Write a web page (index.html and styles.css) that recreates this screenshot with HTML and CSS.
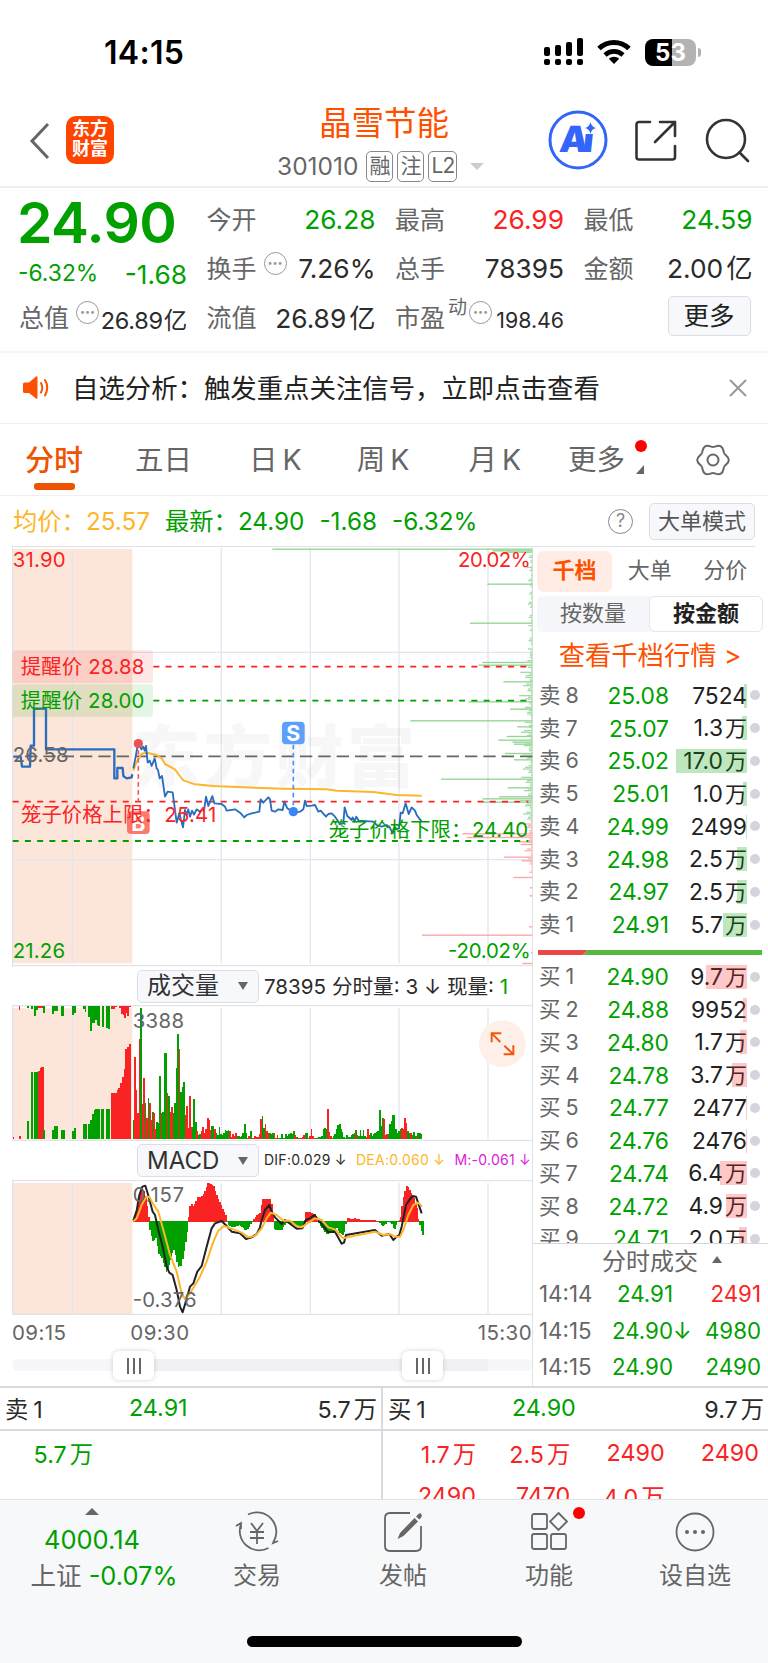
FILE: index.html
```html
<!DOCTYPE html>
<html lang="zh-CN">
<head>
    <meta charset="UTF-8">
    <meta name="viewport" content="width=device-width, initial-scale=1.0">
    <title>晶雪节能 301010</title>
    <link rel="stylesheet" href="styles.css">
</head>
<body>
    <div class="status-bar">
        <span class="clock">14:15</span>
        <div class="status-icons">
            <svg class="signal" width="40" height="28" viewBox="0 0 40 28">
                <rect x="0" y="9" width="6" height="9" rx="2"/><rect x="11" y="7" width="6" height="11" rx="2"/>
                <rect x="22" y="4" width="6" height="14" rx="2"/><rect x="33" y="0" width="6" height="18" rx="2"/>
                <rect x="0" y="21" width="6" height="6" rx="2"/><rect x="11" y="21" width="6" height="6" rx="2"/>
                <rect x="22" y="21" width="6" height="6" rx="2"/><rect x="33" y="21" width="6" height="6" rx="2"/>
            </svg>
            <svg class="wifi" width="36" height="26" viewBox="0 0 36 26">
                <path d="M3 9.5 A21.5 21.5 0 0 1 33 9.5" fill="none" stroke="#000" stroke-width="5"/>
                <path d="M9 16 A13 13 0 0 1 27 16" fill="none" stroke="#000" stroke-width="4.6"/>
                <path d="M18 25 L12.8 19.8 A7.4 7.4 0 0 1 23.2 19.8 Z"/>
            </svg>
            <div class="battery"><span>5</span><span class="dim">3</span></div>
            <i class="battery-nub"></i>
        </div>
    </div>

    <header class="header">
        <svg class="back" width="22" height="38" viewBox="0 0 22 38"><path d="M19 2 L3 19 L19 36"/></svg>
        <div class="logo">东方<br>财富</div>
        <div class="title">
            <h1>晶雪节能</h1>
            <div class="code">301010 <b>融</b><b>注</b><b class="l2">L2</b><i class="caret"></i></div>
        </div>
        <svg class="ai" width="60" height="60" viewBox="0 0 60 60">
            <circle cx="30" cy="30" r="28"/>
            <text x="15" y="42" textLength="34" transform="skewX(-6)">Ai</text>
            <rect x="36" y="12" width="12" height="12" fill="#fff"/>
            <path d="M42.500 12 Q43.500 17 48 18 Q43.500 19 42.500 24 Q41.500 19 37 18 Q41.500 17 42.500 12 Z"/>
        </svg>
        <svg class="line-icon share" width="44" height="44" viewBox="0 0 44 44">
            <path d="M16 3 H5 Q2.500 3 2.500 5.500 V38 Q2.500 40.500 5 40.500 H38.500 Q41 40.500 41 38 V27 M26 3 H41 V17 M41 3 L21 23"/>
        </svg>
        <svg class="line-icon" width="46" height="46" viewBox="0 0 46 46">
            <circle cx="21" cy="21" r="19"/><path d="M34.500 34.500 L43 43"/>
        </svg>
    </header>

    <section class="quote">
        <div class="price">24.90</div>
        <div class="cell"><label>今开</label><span class="green">26.28</span></div>
        <div class="cell"><label>最高</label><span class="red">26.99</span></div>
        <div class="cell"><label>最低</label><span class="green">24.59</span></div>

        <div class="cell change green"><span class="pct">-6.32%</span><span>-1.68</span></div>
        <div class="cell"><label>换手<i class="dots">•••</i></label><span>7.26%</span></div>
        <div class="cell"><label>总手</label><span>78395</span></div>
        <div class="cell"><label>金额</label><span class="raised">2.00<em>亿</em></span></div>

        <div class="cell"><label>总值<i class="dots">•••</i></label><span class="mid">26.89<em>亿</em></span></div>
        <div class="cell"><label>流值</label><span class="raised">26.89<em>亿</em></span></div>
        <div class="cell"><label>市盈<sup>动</sup><i class="dots tight">•••</i></label><span class="small">198.46</span></div>
        <div class="cell end"><button class="more">更多</button></div>
    </section>

    <div class="notice">
        <svg width="28" height="26" viewBox="0 0 28 26">
            <path class="horn" d="M1 9 Q1 7.500 2.500 7.500 H7 L14 1.500 Q15.500 .8 15.500 2.500 V22.500 Q15.500 24.300 14 23.500 L7 18 H2.500 Q1 18 1 16.500 Z"/>
            <path class="wave" d="M19 8 Q21.500 12.500 19 17.500 M23 5 Q27.500 12.500 23 20.500"/>
        </svg>
        <p>自选分析：触发重点关注信号，立即点击查看</p>
        <svg width="18" height="18" viewBox="0 0 18 18"><path class="close" d="M1 1 L17 17 M17 1 L1 17"/></svg>
    </div>

    <nav class="tabs">
        <a class="active">分时</a><a class="five">五日</a><a>日<s></s>K</a><a>周<s></s>K</a><a class="month">月<s></s>K</a>
        <a class="more-tab">更多</a>
        <svg class="gear" width="36" height="36" viewBox="0 0 36 36">
            <g id="teeth"></g>
            <circle cx="18" cy="18" r="5.500"/>
        </svg>
    </nav>

    <div class="summary">
        <span class="avg">均价：25.57</span>
        <span class="green last">最新：<span>24.90</span><span>-1.68</span><span>-6.32%</span></span>
        <i class="help">?</i>
        <button>大单模式</button>
    </div>

    <main class="board">
        <div class="charts">
            <svg class="chart" width="521" height="421" viewBox="36 18 1563 1263">
                <rect class="auction" x="38" y="27" width="359" height="1243"/>
                <path class="grid" d="M217 27 V1270 M664 24 V1270 M931 24 V1270 M1197 24 V1270 M1464 24 V1270 M38 337 H1597 M38 959 H1597"/>
                <path class="frame" d="M38 19 V1280 M36 1277 H1599"/>
                <text class="watermark" x="396" y="726" textLength="850">东方财富</text>
                <g id="depth"></g>
                <rect class="alert-up" x="38" y="331" width="421" height="98" rx="10"/>
                <rect class="alert-down" x="38" y="433" width="421" height="98" rx="10"/>
                <path class="dash red-line" d="M460 380 H1585 M38 785 H1585"/>
                <path class="dash green-line" d="M460 482 H1585 M38 903 H1585"/>
                <path class="prev" d="M75 649 H1597"/>
                <polyline class="avg-line" points="400,692 410,665 425,641 440,638 470,645 485,655 495,672 525,688 535,702 550,721 585,733 640,738 810,745 850,746 980,748 1010,752 1120,756 1190,765 1265,767"/>
                <polyline class="price-line auction-line" points="40,650 62,650 66,680 90,680 92,617 102,617 102,506 138,506 138,628 343,628 343,715 352,715 352,684 368,684 370,708 380,715 395,712 397,703"/>
                <polyline class="price-line" points="400,685 407,650 415,606 424,628 430,620 434,632 438,618 443,668 449,662 455,678 464,655 470,685 474,690 479,715 486,708 495,770 503,755 518,757 530,848 538,820 549,862 555,810 560,825 565,808 570,830 576,812 582,824 590,808 600,815 608,808 612,812 618,770 625,798 637,768 643,790 665,792 675,800 680,812 705,808 720,818 733,832 740,825 755,820 778,815 782,778 790,788 805,772 810,778 815,812 825,815 835,808 848,810 853,785 862,805 880,818 900,815 910,808 915,782 920,798 935,797 945,795 955,815 962,812 978,830 985,822 995,820 1005,830 1020,852 1030,850 1034,802 1042,828 1055,840 1058,832 1063,845 1069,830 1076,842 1120,845 1130,855 1145,860 1160,855 1168,860 1178,880 1183,868 1197,865 1202,818 1208,820 1217,790 1226,822 1235,802 1245,812 1250,825 1265,845"/>
                <path class="buy-stem" d="M415 630 V785"/>
                <circle class="buy-dot" cx="415" cy="611" r="14"/>
                <rect class="buy-box" x="381" y="814" width="68" height="68" rx="12"/>
                <text class="mark" x="415" y="872">B</text>
                <path class="sell-stem" d="M880 614 V800"/>
                <circle class="sell-dot" cx="880" cy="815" r="14"/>
                <rect class="sell-box" x="846" y="545" width="68" height="68" rx="12"/>
                <text class="mark" x="880" y="603">S</text>
                <text class="t-red" x="38" y="80" textLength="159">31.90</text>
                <text class="t-red" x="1374" y="80" textLength="218">20.02%</text>
                <text class="t-green" x="38" y="1253" textLength="157">21.26</text>
                <text class="t-green" x="1344" y="1253" textLength="248">-20.02%</text>
                <text class="t-red" x="62" y="402" textLength="371">提醒价 28.88</text>
                <text class="t-green" x="62" y="503" textLength="371">提醒价 28.00</text>
                <text class="t-gray" x="38" y="667" textLength="168">26.58</text>
                <text class="t-red" x="63" y="845" textLength="428">笼子价格上限：</text>
                <text class="t-red" x="493" y="845" textLength="156">25.41</text>
                <text class="t-green" x="986" y="890" textLength="428">笼子价格下限：</text>
                <text class="t-green" x="1416" y="890" textLength="168">24.40</text>
            </svg>

            <div class="sub-head">
                <button>成交量<i></i></button>
                <span>78395 分时量: 3 ↓ 现量: <b class="green">1</b></span>
            </div>
            <svg class="chart" width="521" height="136" viewBox="36 135 1563 408">
                <rect class="auction" x="38" y="145" width="359" height="393"/>
                <path class="grid" d="M217 145 V538 M664 145 V538 M931 145 V538 M1197 145 V538 M1464 145 V538"/>
                <path class="frame" d="M36 137 H1599 M36 541 H1599 M38 137 V541"/>
                <g id="volume"></g>
                <text class="t-gray" x="398" y="205" textLength="154">3388</text>
                <circle class="expand-bg" cx="1507" cy="251" r="70"/>
                <path class="expand" d="M1475 247 V220 H1504 M1476 221 L1501 246 M1540 256 V283 H1511 M1539 282 L1513 257"/>
            </svg>

            <div class="sub-head macd-head">
                <button class="latin">MACD<i></i></button>
                <span class="indicators"><b>DIF:0.029 ↓</b><b class="dea">DEA:0.060 ↓</b><b class="m">M:-0.061 ↓</b></span>
            </div>
            <svg class="chart" width="521" height="135" viewBox="36 120 1563 405">
                <rect class="auction" x="38" y="129" width="359" height="394"/>
                <path class="grid" d="M217 129 V523 M664 129 V523 M931 129 V523 M1197 129 V523 M1464 129 V523"/>
                <path class="frame" d="M36 122 H1599 M36 523 H1599 M38 122 V523"/>
                <g id="macd"></g>
                <polyline class="dif-line" points="400,242 410,212 418,165 427,140 436,137 443,160 450,185 458,215 465,225 475,270 488,320 500,380 508,398 518,405 530,450 540,500 548,517 556,490 570,440 580,430 592,395 605,378 620,320 635,265 645,250 665,243 680,258 695,275 720,280 738,297 755,292 770,282 780,262 785,240 795,210 808,195 815,215 825,232 845,252 855,240 875,255 890,266 907,265 918,240 930,235 943,225 965,252 985,277 1005,275 1025,311 1032,308 1038,285 1125,270 1145,287 1168,282 1180,300 1190,290 1198,285 1205,260 1218,195 1228,180 1238,168 1248,170 1255,190 1265,220"/>
                <polyline class="avg-line" points="400,244 410,235 425,195 438,172 448,170 458,190 475,215 490,270 510,345 530,395 545,460 555,478 570,460 585,435 600,410 620,365 640,305 655,272 672,258 700,268 725,278 745,292 765,288 785,265 800,235 812,218 830,225 850,242 870,242 890,258 905,262 925,248 945,235 965,240 985,262 1005,268 1020,285 1030,295 1060,288 1125,275 1150,285 1170,282 1185,290 1200,290 1210,270 1225,225 1240,195 1255,188 1266,200"/>
                <text class="t-gray" x="398" y="187" textLength="154">0.157</text>
                <text class="t-gray" x="398" y="501" textLength="192">-0.376</text>
            </svg>
            <div class="times"><span>09:15</span><span class="open">09:30</span><span class="close-time">15:30</span></div>
            <div class="slider"><i class="handle"></i><i class="handle right"></i></div>
        </div>

        <aside class="panel">
            <div class="panel-tabs"><a class="active">千档</a><a>大单</a><a>分价</a></div>
            <div class="segment"><a>按数量</a><a class="active">按金额</a></div>
            <div class="levels-link">查看千档行情 &gt;</div>
            <div class="book">
                <div id="asks"></div>
                <svg class="ratio" width="224" height="5" viewBox="0 0 224 5"><path fill="#ea4747" d="M0 0 H50 L45 5 H0 Z"/><path fill="#56b93f" d="M50 0 H224 V5 H45 Z"/></svg>
                <div id="bids"></div>
            </div>
            <div class="trades-title">分时成交<i></i></div>
            <div class="trade"><span>14:14</span><span class="green p">24.91</span><span class="red q">2491</span></div>
            <div class="trade"><span>14:15</span><span class="green p">24.90</span><span class="green">↓</span><span class="green q">4980</span></div>
            <div class="trade"><span>14:15</span><span class="green p">24.90</span><span class="green q">2490</span></div>
        </aside>
    </main>

    <section class="queue">
        <div class="side">
            <div class="queue-head"><span>卖<s></s>1</span><span class="green">24.91</span><span>5.7<em>万</em></span></div>
            <div class="orders green"><span>5.7<em>万</em></span></div>
        </div>
        <div class="side">
            <div class="queue-head"><span>买<s></s>1</span><span class="green">24.90</span><span>9.7<em>万</em></span></div>
            <div class="orders red">
                <span>1.7<em>万</em></span><span>2.5<em>万</em></span><span>2490</span><span>2490</span>
                <span>2490</span><span>7470</span><span>4.0<em>万</em></span>
            </div>
        </div>
    </section>

    <footer class="bottom">
        <div class="index">
            <i></i>
            <div class="green">4000.14</div>
            <div>上证 <span class="green">-0.07%</span></div>
        </div>
        <div class="item">
            <svg width="46" height="44" viewBox="0 0 46 44">
                <path d="M14 4.500 A19.500 19.500 0 0 1 39.500 32 M41.500 27 L39 33 L44 31 M34.500 38 A19.500 19.500 0 0 1 7 14 M2 16 L7 13 V19 M17 13 L23 21 L29 13 M23 21 V34 M16 22 H30 M16 28 H30"/>
            </svg>
            <span>交易</span>
        </div>
        <div class="item">
            <svg width="40" height="44" viewBox="0 0 40 44">
                <path d="M27 3 H7 Q2 3 2 8 V36 Q2 41 7 41 H33 Q38 41 38 36 V16"/>
                <path class="solid" d="M31.500 8 L35 11.500 L20.500 26 L14.500 29 L17 23 Z M33 6.500 L35.500 4 Q37.500 2.500 38.500 4.500 Q39.300 6 38 7.500 L36.500 9.500 Z"/>
            </svg>
            <span>发帖</span>
        </div>
        <div class="item">
            <svg width="40" height="44" viewBox="0 0 40 44">
                <rect x="3" y="4" width="15" height="15" rx="2"/><rect x="3" y="24" width="15" height="15" rx="2"/><rect x="22" y="24" width="15" height="15" rx="2"/>
                <path d="M29.500 3 L38 11.500 L29.500 20 L21 11.500 Z"/>
            </svg>
            <i class="badge"></i>
            <span>功能</span>
        </div>
        <div class="item">
            <svg width="40" height="44" viewBox="0 0 40 44">
                <circle cx="20" cy="22" r="18.500"/>
                <g class="solid"><circle cx="12" cy="22" r="2"/><circle cx="20" cy="22" r="2"/><circle cx="28" cy="22" r="2"/></g>
            </svg>
            <span>设自选</span>
        </div>
        <div class="home-indicator"></div>
    </footer>

    <script>
        const RED = '#f92323';
        const GREEN = '#00a000';

        function rects(id, list) {
            document.getElementById(id).innerHTML = list.map(r =>
                `<rect x="${r[0]}" y="${r[1]}" width="${r[2]}" height="${r[3]}" fill="${r[4]}"/>`).join('');
        }

        // gear outline
        document.getElementById('teeth').innerHTML = [0, 60, 120, 180, 240, 300].map(a =>
            `<path transform="rotate(${a} 18 18)" d="M29.300 11.500 C30.500 13.600 33.800 14.500 33.800 18 C33.800 21.500 30.500 22.400 29.300 24.500"/>`).join('');

        // order book
        const asks = [
            [8, '25.08', '7524', 3], [7, '25.07', '1.3万', 5], [6, '25.02', '17.0万', 71], [5, '25.01', '1.0万', 4],
            [4, '24.99', '2499', 1], [3, '24.98', '2.5万', 10], [2, '24.97', '2.5万', 10], [1, '24.91', '5.7万', 24]
        ];
        const bids = [
            [1, '24.90', '9.7万', 41], [2, '24.88', '9952', 4], [3, '24.80', '1.7万', 7], [4, '24.78', '3.7万', 15],
            [5, '24.77', '2477', 1], [6, '24.76', '2476', 1], [7, '24.74', '6.4万', 27], [8, '24.72', '4.9万', 21], [9, '24.71', '2.0万', 8]
        ];
        function renderBook(id, name, rows) {
            document.getElementById(id).innerHTML = rows.map(([n, price, qty, w]) => `
                <div class="level ${id}">
                    <span class="name">${name}<s></s>${n}</span>
                    <span class="green">${price}</span>
                    <span class="qty">${qty.replace('万', '<em>万</em>')}<i class="bar" style="width:${w}px"></i></span>
                    <i class="dot"></i>
                </div>`).join('');
        }
        renderBook('asks', '卖', asks);
        renderBook('bids', '买', bids);

        // minute volume, one bar each
        const volume = ('g58 r248 r148 r80 r300 g393 r105 r183 g110 r63 g123 r108 r58 g81 r80 r30 g53 g48 g190 r78 g83 g258 g260 r140 g131 r81 r98 g80 g110 g213 g315 r271 g142 g158 g173 r73 r101 r33 r130 r38 g38 g120 g53 r26 g13 ' +
            'g15 r25 r38 r20 r30 r63 r58 r28 g40 g40 r30 g18 g12 g38 g15 g12 g20 g28 g25 g28 r25 r8 r15 r10 r18 g10 g10 g8 g10 g20 g46 g20 r5 r10 g24 r3 r4 r10 r6 r6 r15 r60 g71 g35 r47 r25 r18 g18 g16 g20 r20 g5 r12 g5 g3 g15 g5 g4 g15 g10 g15 g20 g15 g25 r12 g8 r3 r5 r3 r8 r12 g18 g20 r5 r10 r32 r10 r5 g4 g5 g6 g8 g10 g30 g33 g30 r90 r22 r10 g5 g10 g15 g30 g42 g46 g30 g22 g8 g5 g12 g8 g6 g12 g15 r18 g28 r12 g10 g28 g10 g28 g10 r8 r30 r14 g18 g10 g15 g20 g22 g25 g87 g40 g65 r60 r12 r15 g15 g45 g55 g72 g72 g30 g20 g25 g30 r35 r30 r65 r50 g25 g20 r20 g12 g22 g10 r10 g18 g18 g15').split(' ');
        const bars = volume.map((v, i) => {
            const h = +v.slice(1);
            return [398 + i * 4.45, 538 - h, 5, h, v[0] === 'g' ? GREEN : RED];
        });
        // call auction: matched volume at the bottom
        [[38, 3, 8, 'r'], [56, 6, 10, 'r'], [82, 6, 54, 'g'], [93, 6, 202, 'g'], [103, 11, 202, 'g'], [114, 5, 205, 'r'], [119, 5, 215, 'r'], [124, 7, 218, 'r'], [130, 5, 28, 'g'],
         [157, 5, 28, 'g'], [162, 11, 39, 'g'], [183, 11, 27, 'g'], [217, 5, 26, 'g'], [222, 5, 33, 'g'], [249, 11, 46, 'g'], [265, 5, 46, 'g'], [270, 6, 58, 'g'], [276, 5, 76, 'g'], [281, 5, 88, 'g'],
         [286, 15, 92, 'g'], [303, 9, 92, 'g'], [317, 12, 92, 'g'], [333, 17, 140, 'r'], [350, 5, 148, 'r'], [355, 5, 155, 'r'], [360, 5, 168, 'r'], [365, 6, 188, 'r'], [371, 5, 210, 'r'], [376, 6, 271, 'r'], [382, 5, 277, 'r'], [387, 5, 285, 'r']
        ].forEach(([x, w, h, c]) => bars.push([x, 538 - h, w, h, c === 'g' ? GREEN : RED]));
        // unmatched volume hangs from the top
        [[56, 5, 12, 'r'], [82, 6, 5, 'g'], [93, 6, 10, 'g'], [103, 6, 29, 'g'], [109, 5, 12, 'g'], [114, 15, 6, 'r'], [130, 5, 20, 'g'], [157, 5, 23, 'g'], [162, 11, 15, 'g'], [183, 10, 30, 'g'], [217, 5, 28, 'g'], [222, 5, 22, 'g'],
         [249, 5, 10, 'g'], [254, 5, 17, 'g'], [264, 5, 32, 'g'], [269, 6, 75, 'g'], [275, 10, 50, 'g'], [285, 5, 43, 'g'], [290, 5, 56, 'g'], [295, 6, 61, 'g'], [307, 5, 64, 'g'], [318, 5, 67, 'g'], [324, 5, 70, 'g'],
         [334, 12, 8, 'r'], [346, 6, 4, 'r'], [358, 5, 6, 'r'], [363, 5, 24, 'r'], [368, 4, 26, 'r'], [372, 5, 35, 'r'], [377, 5, 22, 'r'], [382, 5, 29, 'r'], [388, 4, 3, 'r']
        ].forEach(([x, w, h, c]) => bars.push([x, 138, w, h, c === 'g' ? GREEN : RED]));
        rects('volume', bars);

        // MACD histogram, interpolated between turning points
        const hist = [[400, 5], [410, 35], [420, 88], [430, 95], [437, 70], [445, 8], [449, -25], [458, -60], [467, -50], [476, -98], [485, -110], [499, -155], [507, -130], [512, -112], [518, -85], [522, -87], [532, -135], [543, -132], [552, -85], [562, -18], [567, 40], [572, 52], [580, 45], [592, 75], [602, 72], [612, 85], [622, 115], [632, 112], [640, 106], [652, 70], [662, 50], [677, 15], [682, -10], [700, -17], [718, -10], [735, -25], [742, -22], [757, 0], [762, 12], [778, 25], [786, 66], [810, 68], [817, 40], [821, -20], [830, -26], [845, -25], [857, -4], [865, -3], [890, -14], [905, -14], [911, -3], [915, 27], [930, 28], [945, 20], [951, 2], [970, -25], [980, -38], [1000, -30], [1008, -18], [1020, -36], [1030, -40], [1036, -10], [1038, 8], [1044, 12], [1052, 6], [1065, 9], [1080, 5], [1125, 4], [1133, 0], [1148, -14], [1160, -2], [1172, -3], [1182, -25], [1189, -8], [1193, 0], [1200, 6], [1208, 65], [1218, 108], [1222, 105], [1230, 88], [1240, 72], [1250, 40], [1254, 10], [1262, -25], [1270, -45]];
        const macd = [];
        for (let x = 400; x < 1269; x += 4.45) {
            const k = Math.max(1, hist.findIndex(p => p[0] >= x));
            const [a, b] = [hist[k - 1], hist[k]];
            const h = a[1] + (b[1] - a[1]) * (x - a[0]) / (b[0] - a[0]);
            macd.push([x - 1, h > 0 ? 244 - h : 244, 5, Math.abs(h) + 1, h > 0 ? RED : GREEN]);
        }
        rects('macd', macd);

        // order depth on the right edge
        const depth = [[27, 780], [32, 120], [36, 80], [132, 135], [249, 187], [367, 150], [375, 162], [425, 87], [485, 192], [507, 67], [542, 366], [560, 45], [589, 77], [600, 102], [606, 60], [612, 55], [640, 82], [659, 55], [717, 274], [743, 74], [770, 100], [776, 150], [786, 150], [881, 210], [892, 197], [905, 40], [913, 35], [951, 85], [962, 32], [1012, 57], [1043, 8], [1067, 9], [1160, 10], [1185, 331], [1238, 4], [1270, 30]];
        const lines = depth.map(([y, w]) => [1597 - w, y - 1.5, w, 4, y < 845 ? '#93d493' : '#fba5a5']);
        for (let y = 40, i = 0; y < 1000; y += 5, i++) {
            const dense = y > 340 ? 1 : 0.4;
            const w = (4 + (i * 37 % 11) * (i * 13 % 7) * 0.6) * dense * (y > 930 ? 0.5 : 1);
            lines.push([1597 - w, y, w, 4, y < 845 ? '#a5dba5' : '#fdb5b5']);
        }
        rects('depth', lines);
    </script>
</body>
</html>
```
FILE: styles.css
```css
* {
    box-sizing: border-box;
}
body {
    margin: 0;
    width: 768px;
    height: 1663px;
    overflow: hidden;
    background-color: #fff;
    color: #2b2b2b;
    font-family: Inter, "Noto Sans CJK SC", sans-serif;
}
i, em {
    font-style: normal;
}
em {
    margin-left: 3px;
}
/* narrow gap between a hanzi and a latin character */
s {
    display: inline-block;
    width: 5px;
}
svg {
    display: block;
    flex: none;
}
button {
    font-family: inherit;
    padding: 0;
    color: #333;
    background-color: #f7f8fb;
    border: 1px solid #dcdee3;
    border-radius: 5px;
}
.green {
    color: #00a000;
}
.red {
    color: #f92323;
}

/* status bar */
.status-bar {
    height: 100px;
    padding: 4px 67px 0 104px;
    display: flex;
    justify-content: space-between;
    align-items: center;
}
.clock {
    color: #000;
    font-size: 32px;
    font-weight: 600;
    letter-spacing: 0.3px;
}
.status-icons {
    display: flex;
    align-items: center;
}
.wifi {
    margin: 0 13px 0 12px;
}
.battery {
    width: 51px;
    height: 27px;
    border-radius: 8px;
    background: linear-gradient(90deg, #000 27px, #b3b3b3 27px);
    color: #fff;
    font-size: 24px;
    font-weight: 700;
    line-height: 27px;
    text-align: center;
}
.battery-nub {
    width: 3px;
    height: 9px;
    margin-left: 2px;
    border-radius: 0 3px 3px 0;
    background-color: #b3b3b3;
}

/* header */
.header {
    height: 88px;
    padding: 0 16px 0 29px;
    display: flex;
    align-items: center;
    border-bottom: 2px solid #eee;
}
.back {
    margin-top: -4px;
}
.back path {
    fill: none;
    stroke: #666;
    stroke-width: 3;
}
.logo {
    width: 48px;
    height: 48px;
    margin: -6px 0 0 15px;
    padding-top: 3px;
    border-radius: 10px;
    background-color: #ff4400;
    color: #fff;
    font-size: 18px;
    font-weight: 700;
    line-height: 20px;
    text-align: center;
}
.title {
    width: 220px;
    margin: -2px 0 0 163px;
}
h1 {
    margin: 0 0 0 -3px;
    width: 220px;
    text-align: center;
    color: #ff5000;
    font-size: 32.500px;
    font-weight: 400;
    line-height: 48px;
}
.code {
    display: flex;
    align-items: center;
    height: 37px;
    color: #666;
    font-size: 24.500px;
}
.code b {
    width: 27px;
    height: 31px;
    margin-left: 4px;
    border: 1.500px solid #888;
    border-radius: 5px;
    font-size: 21px;
    font-weight: 400;
    line-height: 27px;
    text-align: center;
}
.code b:first-of-type {
    margin-left: 8px;
}
.code .l2 {
    width: 29px;
    letter-spacing: -1px;
}
.caret {
    margin-left: 13px;
    border: 7px solid transparent;
    border-top-color: #ccc;
    border-bottom: 0;
}
.ai {
    margin: -6px 0 0 51px;
    fill: #3465fb;
}
.ai circle {
    fill: none;
    stroke: #3465fb;
    stroke-width: 3;
}
.ai text {
    font-size: 36px;
    font-weight: 900;
}
.line-icon {
    fill: none;
    stroke: #333;
    stroke-width: 2.600;
    stroke-linecap: round;
    stroke-linejoin: round;
    margin-top: -4px;
}
.share {
    margin: -4px 27px 0 26px;
}

/* quote */
.quote {
    height: 165px;
    padding: 7px 16px 0 20px;
    display: grid;
    grid-template-columns: 167px 168px 168px 168px;
    grid-auto-rows: 49.300px;
    column-gap: 20.500px;
    border-bottom: 2px solid #f6f6f6;
}
.price {
    color: #00a000;
    font-size: 57px;
    font-weight: 600;
    line-height: 56px;
    letter-spacing: -0.600px;
    margin-left: -3px;
}
.cell {
    display: flex;
    justify-content: space-between;
    align-items: center;
    font-size: 26.300px;
    white-space: nowrap;
}
.cell label {
    display: flex;
    position: relative;
    top: -2px;
    margin-left: -1px;
    color: #666;
    font-size: 25px;
}
.raised {
    margin-top: -4px;
}
.change {
    padding-top: 11px;
    margin-left: -2px;
}
.pct {
    font-size: 22.800px;
    margin-top: -4px;
}
.mid {
    font-size: 23.500px;
    padding-top: 1px;
    letter-spacing: -0.300px;
}
.mid em {
    margin-left: 1px;
}
.small {
    font-size: 21.300px;
    padding-top: 4px;
}
.dots {
    width: 23px;
    height: 23px;
    margin: 3px 0 0 7px;
    border: 1.500px solid #999;
    border-radius: 50%;
    color: #999;
    font-family: Inter;
    font-size: 9px;
    line-height: 20px;
    text-align: center;
}
.dots.tight {
    margin-left: 2px;
}
.cell sup {
    font-size: 19px;
    line-height: 20px;
    margin-left: 3px;
}
.end {
    justify-content: flex-end;
}
.more {
    width: 83px;
    height: 40px;
    margin: -4px 2px 0 0;
    font-size: 25.500px;
    line-height: 34px;
    color: #222;
}

/* notice */
.notice {
    height: 71px;
    padding: 0 21px 0 22px;
    display: flex;
    align-items: center;
    border-bottom: 1px solid #f0f0f0;
}
.notice p {
    flex: 1;
    margin: -4px 0 0 22px;
    font-size: 26.400px;
    color: #222;
}
.horn {
    fill: #ff5000;
}
.wave {
    fill: none;
    stroke: #ff5000;
    stroke-width: 2;
    stroke-linecap: round;
}
.close {
    stroke: #999;
    stroke-width: 2;
}

/* tabs */
.tabs {
    height: 72px;
    padding: 0 0 0 25px;
    display: flex;
    align-items: center;
    border-bottom: 1px solid #f0f0f0;
    color: #666;
    font-size: 28.500px;
}
.tabs a {
    position: relative;
    top: -2px;
    margin-right: 55px;
    white-space: nowrap;
}
.tabs .active {
    margin-right: 52px;
    color: #ef5300;
    font-size: 29px;
    font-weight: 500;
}
.tabs .five {
    margin-right: 57px;
}
.tabs a:nth-child(4) {
    margin-right: 59px;
}
.tabs .month {
    margin-right: 47px;
}
.tabs .active::after {
    content: "";
    position: absolute;
    left: 9px;
    bottom: -11px;
    width: 41px;
    height: 7px;
    border-radius: 3px;
    background-color: #ef5300;
}
.more-tab::before {
    content: "";
    position: absolute;
    right: -22px;
    top: 3px;
    width: 12px;
    height: 12px;
    border-radius: 50%;
    background-color: #f00;
}
.more-tab::after {
    content: "";
    position: absolute;
    right: -19px;
    bottom: 4px;
    border-left: 8px solid transparent;
    border-bottom: 9px solid #666;
}
.tabs .more-tab {
    margin-right: 0;
}
.gear {
    margin: 0 37px 0 auto;
    fill: none;
    stroke: #666;
    stroke-width: 2;
}

/* summary line */
.summary {
    height: 50px;
    padding: 0 13px;
    display: flex;
    align-items: center;
    font-size: 24.300px;
    white-space: nowrap;
}
.avg {
    color: #fdb62c;
    width: 152px;
}
.avg, .last {
    margin-top: -3px;
}
.last {
    flex: 1;
}
.last span {
    margin-right: 15px;
}
.help {
    width: 25px;
    height: 25px;
    border: 1.500px solid #888;
    border-radius: 50%;
    color: #888;
    font-size: 18px;
    line-height: 22px;
    text-align: center;
}
.summary button {
    width: 106px;
    height: 37px;
    margin-left: 16px;
    font-size: 22px;
    line-height: 31px;
    color: #555;
}

/* main board */
.board {
    height: 840px;
    display: flex;
    padding-left: 12px;
    background: linear-gradient(#dfe1e6, #dfe1e6) 12px 0 / 743px 1px no-repeat;
}
.charts {
    flex: none;
    width: 521px;
    border-right: 1px solid #dfe1e6;
}
.chart text {
    font-size: 61px;
}
.auction {
    fill: #fce5d9;
}
.grid {
    stroke: #e3e6ee;
    stroke-width: 4;
}
.frame {
    fill: none;
    stroke: #dcdee4;
    stroke-width: 3;
}
.chart .watermark {
    font-size: 206px;
    font-weight: 900;
    fill: #000;
    fill-opacity: 0.03;
}
.dash {
    stroke-width: 5.500;
    stroke-dasharray: 18 18.700;
}
.red-line {
    stroke: #f92323;
}
.green-line {
    stroke: #00a000;
}
.prev {
    stroke: #666;
    stroke-width: 5.500;
    stroke-dasharray: 37 18;
}
.price-line, .avg-line, .dif-line {
    fill: none;
    stroke: #2a6dbe;
    stroke-width: 5.500;
    stroke-linejoin: round;
}
.auction-line {
    stroke-width: 7;
}
.avg-line {
    stroke: #fdb62c;
    stroke-width: 6;
}
.dif-line {
    stroke: #222;
    stroke-width: 6;
}
.alert-up {
    fill: #f92323;
    fill-opacity: 0.11;
}
.alert-down {
    fill: #00a000;
    fill-opacity: 0.11;
}
.t-red {
    fill: #f92323;
}
.t-green {
    fill: #00a000;
}
.t-gray {
    fill: #666;
}
.buy-stem, .sell-stem {
    stroke: #f85a5a;
    stroke-width: 5;
    stroke-dasharray: 14 10;
}
.buy-dot {
    fill: #e95353;
}
.buy-box {
    fill: #fb6a5d;
    fill-opacity: 0.9;
}
.sell-stem {
    stroke: #4b91fc;
}
.sell-dot {
    fill: #3a86f5;
}
.sell-box {
    fill: #5c9ffd;
}
.chart .mark {
    fill: #fff;
    font-size: 64px;
    font-weight: 700;
    text-anchor: middle;
}
#volume, #macd {
    shape-rendering: crispEdges;
}
.expand-bg {
    fill: #fef0e9;
}
.expand {
    fill: none;
    stroke: #f2580c;
    stroke-width: 6;
}
.sub-head {
    height: 38px;
    padding-left: 125px;
    display: flex;
    align-items: center;
    font-size: 20.600px;
    white-space: nowrap;
}
.sub-head > span {
    position: relative;
    top: -1px;
}
.sub-head button {
    flex: none;
    width: 122px;
    height: 33px;
    margin-right: 5px;
    padding: 0 10px 0 9px;
    display: flex;
    justify-content: space-between;
    align-items: center;
    font-size: 24px;
    line-height: 28px;
}
.sub-head button i {
    border: 5px solid transparent;
    border-top: 8px solid #666;
    border-bottom: 0;
}
.sub-head b {
    font-weight: 400;
}
.macd-head {
    height: 39px;
}
.indicators {
    width: 267px;
    display: flex;
    justify-content: space-between;
    font-size: 14px;
    letter-spacing: 0.250px;
}
.dea {
    color: #fdb62c;
}
.m {
    color: #dc20dc;
}
.times {
    height: 34px;
    display: flex;
    align-items: center;
    color: #666;
    font-size: 20.500px;
    letter-spacing: 0.400px;
}
.times .open {
    margin-left: 64px;
}
.times .close-time {
    margin-left: auto;
}
.slider {
    position: relative;
    height: 12px;
    margin-top: 10px;
    border-radius: 6px;
    background: linear-gradient(90deg, #f7f7fa 110px, #f1f1f4 110px, #f1f1f4 476px, #f7f7fa 476px);
}
.handle {
    position: absolute;
    left: 101px;
    top: -8px;
    width: 41px;
    height: 29px;
    border-radius: 6px;
    background: #fff linear-gradient(90deg, #666 2px, transparent 2px, transparent 6px, #666 6px, #666 8px, transparent 8px, transparent 12px, #666 12px) center / 14px 16px no-repeat;
    box-shadow: 0 0 5px rgba(0, 0, 0, 0.18);
}
.handle.right {
    left: 390px;
}

/* order book panel */
.panel {
    flex: none;
    width: 235px;
    padding: 5px 5px 0 4px;
    color: #666;
    font-size: 22px;
}
.panel-tabs {
    display: flex;
    height: 41px;
    line-height: 38px;
}
.panel-tabs a {
    width: 75.500px;
    text-align: center;
}
.panel-tabs .active {
    width: 75px;
    background-color: #ffece4;
    border-radius: 7px;
    color: #ff5000;
    font-weight: 700;
}
.segment {
    display: flex;
    height: 36px;
    margin-top: 4px;
    border-radius: 6px;
    background-color: #f6f7fa;
    line-height: 34px;
    text-align: center;
}
.segment a {
    flex: 1;
}
.segment .active {
    background-color: #fff;
    border: 1px solid #e5e6ea;
    border-radius: 6px;
    color: #222;
    font-weight: 700;
    line-height: 32px;
}
.levels-link {
    height: 47px;
    color: #ff5000;
    font-size: 26.300px;
    line-height: 47px;
    text-align: center;
    white-space: nowrap;
}
.book {
    height: 564.500px;
    margin: 0 -5px 0 -4px;
    overflow: hidden;
    border-bottom: 1px solid #d5d7dd;
}
.level {
    height: 32.750px;
    padding-left: 6px;
    display: flex;
    align-items: center;
    font-size: 22.800px;
    line-height: 31px;
}
.level .name {
    width: 52px;
    font-size: 21.500px;
}
.level .green {
    width: 78px;
    text-align: right;
}
.level .qty {
    position: relative;
    width: 78px;
    color: #222;
    text-align: right;
    white-space: nowrap;
}
.level em {
    font-size: 22px;
    margin-left: 2px;
}
.bar {
    position: absolute;
    right: 0;
    top: 4px;
    height: 24px;
    background-color: rgba(0, 160, 0, 0.25);
}
.bids .bar {
    background-color: rgba(249, 35, 35, 0.25);
}
.dot {
    width: 10px;
    height: 10px;
    margin-left: 3px;
    border-radius: 50%;
    background-color: #d2d5db;
}
.ratio {
    margin: 9px 0 5.600px 5px;
}
.trades-title {
    height: 32px;
    margin-left: 65px;
    display: flex;
    align-items: center;
    font-size: 24px;
}
.trades-title i {
    margin-left: 14px;
    border: 5px solid transparent;
    border-bottom: 7px solid #666;
    border-top: 0;
}
.trade {
    height: 36.600px;
    padding: 0 2px;
    display: flex;
    align-items: center;
    font-size: 22.300px;
}
.trade > span:first-child {
    width: 56px;
}
.trade .p {
    width: 78px;
    text-align: right;
}
.trade .q {
    margin-left: auto;
}

/* level-1 queue */
.queue {
    height: 113px;
    display: flex;
    border-top: 2px solid #d8dae0;
    overflow: hidden;
    font-size: 23.300px;
}
.side {
    width: 385px;
}
.side:first-child {
    width: 383px;
    border-right: 2px solid #d8dae0;
}
.queue-head {
    height: 43px;
    padding: 0 4px 2px 5px;
    display: flex;
    align-items: center;
    border-bottom: 2px solid #d8dae0;
}
.queue-head span:first-child {
    width: 124px;
}
.queue-head span:last-child {
    margin-left: auto;
}
.orders {
    display: grid;
    grid-template-columns: 93px 94.300px 94.300px 94.300px;
    grid-auto-rows: 43px;
    align-items: center;
    text-align: right;
}

/* bottom bar */
.bottom {
    position: relative;
    height: 164px;
    display: flex;
    background-color: #f7f8fa;
    border-top: 1px solid #e0e2e6;
    color: #666;
    font-size: 24px;
}
.index {
    width: 184px;
    font-size: 25.500px;
    text-align: center;
    line-height: 36px;
}
.index i {
    display: block;
    width: 14px;
    margin: 8px auto 7px;
    border: 7px solid transparent;
    border-bottom: 7px solid #666;
    border-top: 0;
}
.index div + div {
    white-space: nowrap;
    margin-left: 24px;
}
.item {
    position: relative;
    width: 146px;
    padding-top: 10px;
    display: flex;
    flex-direction: column;
    align-items: center;
}
.item svg {
    fill: none;
    stroke: #666;
    stroke-width: 1.800;
    margin-bottom: 2px;
}
.item .solid {
    fill: #666;
    stroke: none;
}
.badge {
    position: absolute;
    left: 97px;
    top: 7px;
    width: 12px;
    height: 12px;
    border-radius: 50%;
    background-color: #f00;
}
.home-indicator {
    position: absolute;
    left: 247px;
    bottom: 16px;
    width: 275px;
    height: 11px;
    border-radius: 6px;
    background-color: #000;
}
```
